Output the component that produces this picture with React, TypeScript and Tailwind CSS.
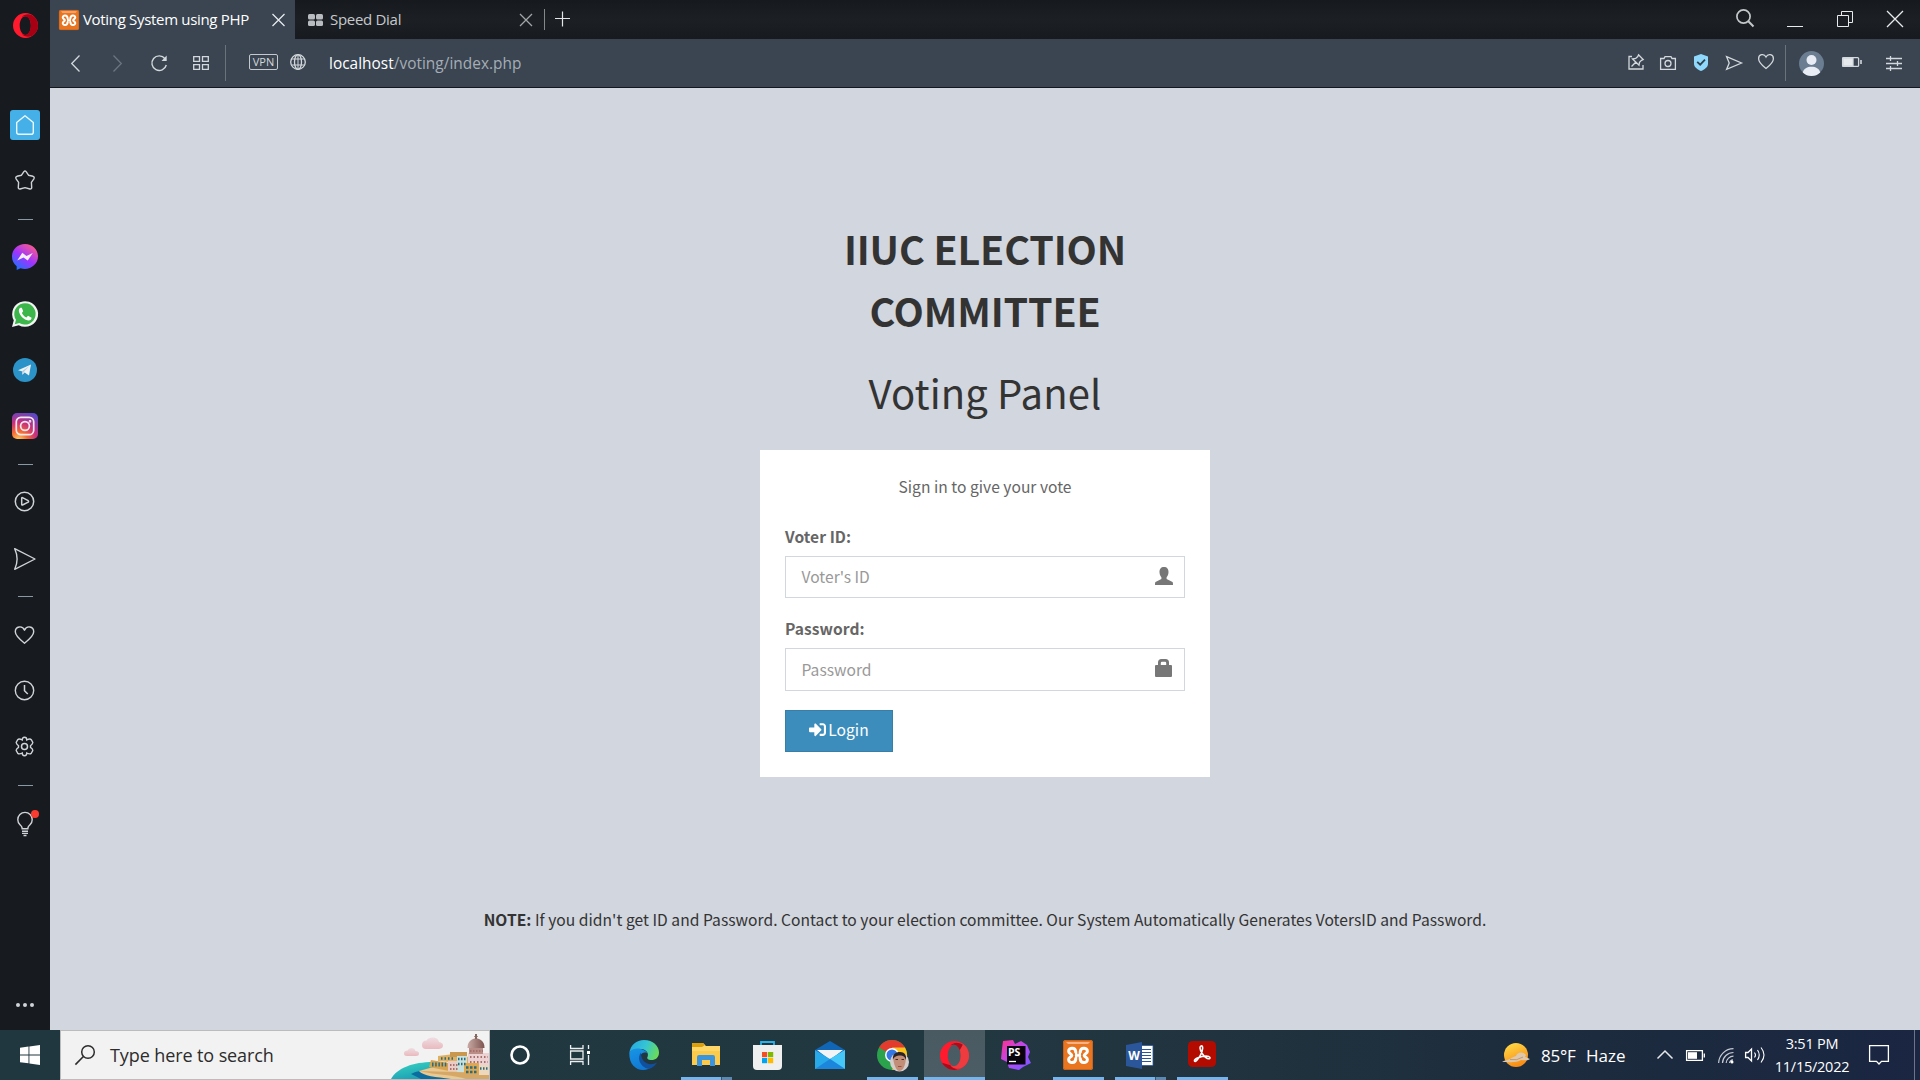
import React from "react";
import { FaSignInAlt } from "react-icons/fa";

const UI = "font-['Open_Sans','Noto_Sans',sans-serif]";

type IconProps = { w: number; h: number; vb?: string; className?: string; children: React.ReactNode };

function Icon({ w, h, vb, className = "", children }: IconProps) {
  return (
    <svg
      width={w}
      height={h}
      viewBox={vb ?? `0 0 ${w} ${h}`}
      fill="none"
      stroke="currentColor"
      strokeWidth={1.3}
      className={`block shrink-0 overflow-visible ${className}`}
    >
      {children}
    </svg>
  );
}

function XamppMark({ size, className = "" }: { size: number; className?: string }) {
  return (
    <Icon w={size} h={size} vb="0 0 30 30" className={className}>
      <rect width="30" height="30" rx="2.5" fill="#ea7521" stroke="none" />
      <path d="M3 2h24l-2 2H5z" fill="#f5b183" stroke="none" />
      <rect x=".5" y=".5" width="29" height="29" rx="2" stroke="#c9631b" strokeWidth="1" />
      <g stroke="#fff" strokeWidth="3" strokeLinejoin="round" strokeLinecap="round">
        <path d="M12.800 12C12.500 7 5.600 7.300 5.600 11.300C5.600 13.500 8.800 13.800 8.800 15.400C8.800 17 5.600 17.300 5.600 19.600C5.600 23.600 12.500 23.800 12.800 18.800" />
        <path d="M17.200 12C17.500 7 24.400 7.300 24.400 11.300C24.400 13.500 21.200 13.800 21.200 15.400C21.200 17 24.400 17.300 24.400 19.600C24.400 23.600 17.500 23.800 17.200 18.800" />
        <path d="M12.800 12L13.600 15.400L12.800 18.800M17.200 12L16.400 15.400L17.200 18.800M13 15.400H17" strokeWidth="2.400" />
      </g>
    </Icon>
  );
}

function OperaMark({ w, h, className = "", bright = false }: { w: number; h: number; className?: string; bright?: boolean }) {
  return (
    <Icon w={w} h={h} vb="0 0 28 28" className={className}>
      <path
        fillRule="evenodd"
        stroke="none"
        fill="#ff1b2d"
        d="M14 0a14 14 0 1 0 0 28a14 14 0 1 0 0-28zM14 3.500c3.800 0 6 4.800 6 10.500s-2.200 10.500-6 10.500s-6.500-4.800-6.500-10.500s2.700-10.500 6.500-10.500z"
      />
      <path
        stroke="none"
        fill={bright ? "#ee3b3f" : "#a70014"}
        d="M10 4.500C12 1.500 17 .500 21 2.200C25.500 4.600 28 9 28 14S25.500 23.400 21 25.800C17 27.500 12 26.500 10 23.500C15 26.500 20 22 20 14S15 1.500 10 4.500z"
      />
      {bright && <path stroke="none" fill="#a90d1c" d="M10 4.500C13 .800 18 1 22 3.500L19 9C17 3.500 13 2.500 10 4.500zM2 21C5 26.500 11 29 17 27.600C14 27 11 25.500 10 23.500z" />}
    </Icon>
  );
}

function TitleBar() {
  return (
    <div className="flex h-[39px] shrink-0 bg-gradient-to-b from-[#16191d] via-[#1c1f23] to-[#171a1e] text-[15px] leading-[39px]">
      <div className="flex w-[245px] items-center bg-[#3a4551] text-white">
        <XamppMark size={20} className="ml-[9px]" />
        <span className="ml-1 w-[189px] whitespace-nowrap tracking-[-0.32px]">Voting System using PHP</span>
        <Icon w={12} h={12} className="text-[#e6e9ec]">
          <path d="M.5 0L12.500 12M12.500 0L.5 12" />
        </Icon>
      </div>
      <div className="flex w-[249px] items-center text-[#c6c9cc]">
        <Icon w={15} h={12} className="ml-[13px]">
          <g fill="#b9bcc0" stroke="none">
            <rect width="7" height="5.500" rx="1.500" />
            <rect x="8" width="7" height="5.500" rx="1.500" />
            <rect y="6.500" width="7" height="5.500" rx="1.500" />
            <rect x="8" y="6.500" width="7" height="5.500" rx="1.500" />
          </g>
        </Icon>
        <span className="ml-[7px] w-[190px] whitespace-nowrap tracking-[-0.3px]">Speed Dial</span>
        <Icon w={12} h={12} className="text-[#a3a6a9]">
          <path d="M0 0L12 12M12 0L0 12" />
        </Icon>
      </div>
      <div className="mt-[9px] h-[21px] w-px bg-[#85888b]" />
      <Icon w={14} h={14} className="mt-3 ml-[10px] text-[#e3e5e7]">
        <path d="M7.500 -.5V14.500M0 6.500H15" strokeWidth="1.200" />
      </Icon>
      <div className="flex-1" />
      <div className="mt-[9px] mr-[17px] flex text-[#e8eaec]">
        <Icon w={18} h={18} className="text-[#c5c8ca]">
          <circle cx="7.500" cy="7.500" r="6.600" strokeWidth="1.700" />
          <path d="M12.300 12.300L17.500 17.500" strokeWidth="2" />
        </Icon>
        <Icon w={16} h={18} className="ml-[33px]">
          <path d="M0 17.500H16" strokeWidth="1" />
        </Icon>
        <Icon w={16} h={18} className="ml-[34px]">
          <path d="M.5 6.500H11.500V17.500H.5zM4.500 6V2.500H15.500V13.500H12" strokeWidth="1" />
        </Icon>
        <Icon w={16} h={18} className="ml-[34px]">
          <path d="M0 2L16 18M16 2L0 18" />
        </Icon>
      </div>
    </div>
  );
}

function AddressBar() {
  return (
    <div className="flex h-[49px] shrink-0 items-center border-b border-[#14181c] bg-[#3a4551] text-[#d3d8dc]">
      <Icon w={9} h={17} className="ml-[21px]">
        <path d="M8.500 .5L.7 8.500L8.500 16.500" />
      </Icon>
      <Icon w={9} h={17} className="ml-[33px] text-[#6a7580]">
        <path d="M.5 .5L8.300 8.500L.5 16.500" />
      </Icon>
      <Icon w={16} h={16} className="ml-[29px]">
        <path d="M14 3.700A7.300 7.300 0 1 0 15.300 10" strokeWidth="1.400" />
        <path d="M15.700 .5V6H10.500z" fill="currentColor" stroke="none" />
      </Icon>
      <Icon w={16} h={14} className="ml-[26px]">
        <path d="M.7 .6H6.500V5.400H.7zM9.500 .6H15.300V5.400H9.500zM.7 8.600H6.500V13.400H.7zM9.500 8.600H15.300V13.400H9.500z" />
      </Icon>
      <div className="ml-4 h-9 w-px bg-[#69737e]" />
      <div className={`ml-[23px] mb-[2px] flex h-4 w-[29px] items-center justify-center rounded-[2px] border border-[#c3c9ce] text-[11px] leading-[14px] text-[#d3d8dc] ${UI}`}>VPN</div>
      <Icon w={16} h={16} className="mb-[2px] ml-3">
        <circle cx="8" cy="8" r="7.300" />
        <ellipse cx="8" cy="8" rx="3.500" ry="7.300" />
        <path d="M1.500 5H14.500M1.500 11H14.500M8 1V15" strokeWidth="1" />
      </Icon>
      <div className="mt-[2px] ml-[23px] text-[15.4px] whitespace-nowrap text-[#a5adb6] tracking-[0.03px]">
        <span className="text-white">localhost</span>/voting/index.php
      </div>
      <div className="flex-1" />
      <Icon w={16} h={16} className="mb-[2px]">
        <path d="M4 2.500H1V15H15V11" />
        <path d="M10.500 .8L15.200 5.500L13.500 6.300L11.500 8.300L11 11.200L8 8.300L4.500 5L7.700 4.500L9.800 2.500zM7.700 8.200L3.500 12.500" />
      </Icon>
      <Icon w={16} h={14} className="mb-px ml-4">
        <path d="M.6 2.500H4L5 .7H11L12 2.500H15.400V13.400H.6z" />
        <circle cx="8" cy="7.500" r="3" />
      </Icon>
      <Icon w={14} h={17} className="mb-px ml-[18px]">
        <path d="M7 0L14 2.500V10C14 13 10.500 15.500 7 17C3.500 15.500 0 13 0 10V2.500z" fill="#8fd8fb" stroke="none" />
        <path d="M3.200 7.800L6.200 10.700L11 5.700" stroke="#2f3f4c" strokeWidth="1.800" />
      </Icon>
      <Icon w={16} h={14} className="ml-[18px]">
        <path d="M.6 .7L15.500 7L.6 13.400L3.200 7z" />
      </Icon>
      <Icon w={16} h={15} className="mb-[3px] ml-4">
        <path d="M8 14.500C3 10.500 .6 7.500 .6 4.700C.6 .2 6 -.8 8 3C10 -.8 15.400 .2 15.400 4.700C15.400 7.500 13 10.500 8 14.500z" />
      </Icon>
      <div className="ml-[11px] h-9 w-px bg-[#69737e]" />
      <Icon w={25} h={25} className="ml-[13px]">
        <circle cx="12.500" cy="12.500" r="12.500" fill="#6b7d90" stroke="none" />
        <circle cx="12.500" cy="9" r="5" fill="#e8edf5" stroke="none" />
        <path d="M3.800 21.500C5 13.800 20 13.800 21.200 21.500A12.500 12.500 0 0 1 3.800 21.500z" fill="#e8edf5" stroke="none" />
      </Icon>
      <Icon w={20} h={10} className="mb-[2px] ml-[18px]">
        <rect x=".6" y=".6" width="16" height="8.800" rx="1" />
        <path d="M1 1H11V9H1z" fill="#e6e9ec" />
        <path d="M19 3V7" strokeWidth="1.600" />
      </Icon>
      <Icon w={16} h={15} className="mr-[18px] ml-6">
        <path d="M0 2.500H16M0 7.500H16M0 12.500H16M4.500 0V5M11.500 5V10M4.500 10V15" />
      </Icon>
    </div>
  );
}

function Dash({ className }: { className: string }) {
  return <div className={`h-px w-[15px] shrink-0 bg-[#8898a5] ${className}`} />;
}

function Sidebar() {
  return (
    <aside className="flex w-[50px] shrink-0 flex-col items-center bg-[#171a1f] text-[#cfd4d8]">
      <OperaMark w={25} h={25} className="mt-[13px]" />
      <div className="mt-[72px] flex size-[30px] shrink-0 items-center justify-center rounded-[3px] bg-[#45b0e8]">
        <Icon w={18} h={20} className="text-[#ecf7fd]">
          <path d="M9 .7L17.300 7.500V17.200Q17.300 19.300 15.200 19.300H2.800Q.7 19.300 .7 17.200V7.500z" strokeWidth="1.400" strokeLinejoin="round" />
        </Icon>
      </div>
      <Icon w={20} h={20} className="mt-[30px] mr-px">
        <path d="M8.900 1.600Q10 .3 11.100 1.600L13.500 5.200L18 6.300Q19.800 7 18.900 8.800L16.400 12.300L16.700 17.600Q16.500 19.300 14.900 19L10 17.600L5.100 19Q3.500 19.300 3.300 17.600L3.600 12.300L1.100 8.800Q.2 7 2 6.300L6.500 5.200z" strokeWidth="1.400" strokeLinejoin="round" />
      </Icon>
      <Dash className="mt-[29px]" />
      <Icon w={26} h={26} className="mt-6">
        <defs>
          <linearGradient id="msgr" x1="0.1" y1="1" x2="0.8" y2="0">
            <stop offset="0" stopColor="#0a7cff" />
            <stop offset="0.5" stopColor="#a033ff" />
            <stop offset="1" stopColor="#ff5c87" />
          </linearGradient>
        </defs>
        <path d="M13 0C5.500 0 0 5.500 0 12.500C0 16.500 1.800 20 4.700 22.300V26L8.500 24.200C17 27 26 21 26 12.500C26 5.500 20.500 0 13 0z" fill="url(#msgr)" stroke="none" />
        <path d="M5.200 16.500L10.300 8.800L14.500 12L20.800 9L15.700 16.500L11.500 13.400z" fill="#f3eefc" stroke="none" />
      </Icon>
      <Icon w={26} h={26} className="mt-[31px]">
        <path d="M0 26L1.800 19.300A13 12.800 0 1 1 6.800 24.200z" fill="#f2f4f2" stroke="none" />
        <path d="M2.800 23.200L4 18.800A10.700 10.700 0 1 1 7.300 22z" fill="#3cb54a" stroke="none" />
        <path d="M8.500 6.700C7.200 7.300 6.500 8.800 7 10.800C8 15 12 19 16.200 19.500C18.300 19.700 19.600 18.400 19.600 16.700L16 14.800L14.400 16.400C12.300 15.500 10.600 13.700 9.900 11.900L11.200 10.300L9.800 6.800z" fill="#fff" stroke="none" />
      </Icon>
      <Icon w={24} h={24} className="mt-[31px]">
        <circle cx="12" cy="12" r="12" fill="#2b93c7" stroke="none" />
        <path d="M5 12.200L18 6.500L16 17.500L11.700 14.600L9.300 16.800L8.900 13.200z" fill="#eef3f6" stroke="none" />
        <path d="M8.900 13.200L16.300 8L10.800 14L9.300 16.800z" fill="#b5cfdf" stroke="none" />
      </Icon>
      <Icon w={26} h={26} className="mt-[31px]">
        <defs>
          <radialGradient id="insta" cx="0.25" cy="1.05" r="1.15">
            <stop offset="0" stopColor="#ffd563" />
            <stop offset="0.3" stopColor="#f36b35" />
            <stop offset="0.6" stopColor="#c9307c" />
            <stop offset="1" stopColor="#5b48c8" />
          </radialGradient>
        </defs>
        <rect width="26" height="26" rx="5" fill="url(#insta)" stroke="none" />
        <g stroke="#f6e9ee" strokeWidth="1.700">
          <rect x="4.300" y="4.300" width="17.400" height="17.400" rx="4.500" />
          <circle cx="13" cy="13" r="4.400" />
          <circle cx="18" cy="8.300" r=".5" />
        </g>
      </Icon>
      <Dash className="mt-[25px]" />
      <Icon w={20} h={20} className="mt-[26px] mr-[2px]">
        <circle cx="10.500" cy="10.500" r="9.200" strokeWidth="1.500" />
        <path d="M7.700 7.200Q7.700 6.400 8.500 6.700L14.200 9.700Q15 10.500 14.200 11.200L8.500 14Q7.700 14.200 7.700 13.500z" strokeWidth="1.500" strokeLinejoin="round" />
      </Icon>
      <Icon w={22} h={22} className="mt-[37px]">
        <path d="M.7 .7L21 11L.7 21.300Q5.500 11 .7 .7z" strokeWidth="1.400" strokeLinejoin="round" />
      </Icon>
      <Dash className="mt-[26px]" />
      <Icon w={20} h={18} className="mt-[29px] mr-[2px]">
        <path d="M10.500 17.200C4.500 12.500 1.300 9.500 1.300 5.800C1.300 0 8.500 -.8 10.500 4.200C12.500 -.8 19.700 0 19.700 5.800C19.700 9.500 16.500 12.500 10.500 17.200z" strokeWidth="1.400" strokeLinejoin="round" />
      </Icon>
      <Icon w={20} h={20} className="mt-[36px] mr-[2px]">
        <circle cx="10.500" cy="10.500" r="9.200" strokeWidth="1.400" />
        <path d="M10.500 5V10.800L13.800 14" strokeWidth="1.500" />
      </Icon>
      <Icon w={18} h={20} className="mt-[36px] mr-[2px]">
        <g transform="translate(.5 .5)">
          <path d="M6.700 3.500Q6.700 .8 9 .8T11.300 3.500Q14.500 1.800 15.800 3.200L17.300 6Q17.300 7.500 15 9.200V10.800Q17.500 12.500 17.300 14L15.800 16.700Q14.500 18.200 11.300 16.500Q11.300 19.200 9 19.200T6.700 16.500Q3.500 18.200 2.200 16.700L.7 14Q.5 12.500 3 10.800V9.200Q.7 7.500 .7 6L2.200 3.200Q3.500 1.800 6.700 3.500z" strokeWidth="1.400" />
          <circle cx="9" cy="10" r="3" strokeWidth="1.500" />
        </g>
      </Icon>
      <Dash className="mt-[29px]" />
      <div className="relative mt-[26px] shrink-0">
        <Icon w={16} h={24}>
          <path d="M5 16.500V15.500Q4.800 14.500 3 12.800A7.200 7.200 0 1 1 13 12.800Q11.200 14.500 11 15.500V16.500M4.500 16.700H11.500M5 19.200H11M5 21.400H11M6.500 23.500H9.500" strokeWidth="1.400" />
        </Icon>
        <div className="absolute -top-[2px] left-[14px] size-2 rounded-full bg-[#fb3b2f]" />
      </div>
      <div className="mt-auto mb-[23px] flex gap-[3px]">
        <div className="size-1 rounded-full bg-[#cfd4d8]" />
        <div className="size-1 rounded-full bg-[#cfd4d8]" />
        <div className="size-1 rounded-full bg-[#cfd4d8]" />
      </div>
    </aside>
  );
}

function LoginPage() {
  return (
    <main className="flex flex-1 flex-col items-center bg-[#d2d6de] font-['Noto_Sans_CJK_SC',sans-serif] text-[#333]">
      <h1 className="mt-[129px] w-[450px] text-center text-[39.4px] leading-[62px] font-bold tracking-[-0.15px]">
        IIUC ELECTION
        <br />
        COMMITTEE
      </h1>
      <h2 className="mt-[20px] text-[40px] leading-[62px] tracking-[0.12px]">Voting Panel</h2>
      <form className="mt-[27px] flex w-[450px] flex-col bg-white px-[25px] pt-6 pb-[25px] text-[15.6px] leading-[25px] text-[#666]" onSubmit={(e) => e.preventDefault()}>
        <p className="text-center tracking-[0.02px]">Sign in to give your vote</p>
        <label className="mt-[25px] font-bold tracking-[0.05px]">Voter ID:</label>
        <div className="mt-[7px] flex h-[42px] justify-between border border-[#d2d6de] pr-[11px] pl-[15.500px]">
          <span className="mt-[7px] text-[#999]">Voter's ID</span>
          <Icon w={18} h={18} className="mt-[10px]">
            <path d="M9 0C12 0 13.700 2 13.500 5.500C13.300 8 12.300 9.300 11.600 10.300V12L17.500 15C18 15.500 18 16.500 18 18H0C0 16.500 0 15.500 .5 15L6.400 12V10.300C5.700 9.300 4.700 8 4.500 5.500C4.300 2 6 0 9 0z" fill="#777" stroke="none" />
          </Icon>
        </div>
        <label className="mt-[18px] font-bold tracking-[0.05px]">Password:</label>
        <div className="mt-[7px] flex h-[43px] justify-between border border-[#d2d6de] pr-[12.500px] pl-[15.500px]">
          <span className="mt-2 text-[#999]">Password</span>
          <Icon w={17} h={18} className="mt-[10px]">
            <path fillRule="evenodd" d="M3 6V3.500Q3 0 6.500 0H10.500Q14 0 14 3.500V6H16Q17 6 17 7V17Q17 18 16 18H1Q0 18 0 17V7Q0 6 1 6zM5.800 6H11.200V4Q11.200 2.800 10 2.800H7Q5.800 2.800 5.800 4z" fill="#777" stroke="none" />
          </Icon>
        </div>
        <button className="mt-[19px] flex h-[42px] w-[108px] items-center justify-center border border-[#367fa9] bg-[#3c8dbc] pb-[3px] text-white">
          <FaSignInAlt size={17} />
          <span className="ml-[2px]">Login</span>
        </button>
      </form>
      <p className="mt-[130px] text-[15.6px] leading-[25px] whitespace-nowrap tracking-[0.035px]">
        <b>NOTE:</b> If you didn't get ID and Password. Contact to your election committee. Our System Automatically Generates VotersID and Password.
      </p>
    </main>
  );
}

function SearchArt() {
  return (
    <Icon w={98} h={48}>
      <defs>
        <linearGradient id="sea" x1="0" y1="0" x2="1" y2="1">
          <stop offset="0" stopColor="#38d6c0" />
          <stop offset="1" stopColor="#0d7fb0" />
        </linearGradient>
        <linearGradient id="dome" x1="0" y1="0" x2="1" y2="0">
          <stop offset="0" stopColor="#c9aaa5" />
          <stop offset="1" stopColor="#7d5450" />
        </linearGradient>
        <linearGradient id="cloud" x1="0" y1="0" x2="0" y2="1">
          <stop offset="0" stopColor="#eedee2" />
          <stop offset="1" stopColor="#e9b9be" />
        </linearGradient>
      </defs>
      <g stroke="none">
        <path d="M13 22.500Q13 19.500 16.500 19.500Q17.500 17 20.500 17T24.500 20Q28 20 28 22.500T25 25H16Q13 25 13 22.500z" fill="url(#cloud)" />
        <path d="M31 14Q31 9.500 35.500 9.500Q37 6.500 42 6.500T48 11Q52 11.500 52 14.500T48 18H35Q31 18 31 14z" fill="url(#cloud)" />
        <path d="M0 48C6 37 22 31 42 31L98 36V48z" fill="url(#sea)" />
        <path d="M20 43C35 36 50 40 98 40V48H30z" fill="#0b6d9f" />
        <path d="M28 40L46 35L98 38V48H60C45 46 32 45 28 40z" fill="#e9c891" />
        <path d="M28 40C45 44 65 44 75 48H98V42z" fill="#d6a868" />
        <path d="M40 29L58 32V40L38 36z" fill="#d9a34e" />
        <path d="M47 25L63 23L78 26V40H58V31L47 30z" fill="#e0b060" />
        <path d="M59 21H76V26H59z" fill="#c9974d" />
        <path d="M57 30H68V40H57z" fill="#eacbc6" />
        <path d="M66 25H76V41H66z" fill="#c8e0de" />
        <path d="M77 22H98V35H77z" fill="#edd2d3" />
        <path d="M73 32H88V43H73z" fill="#dfa750" />
        <path d="M88 34H98V44H88z" fill="#edd8be" />
        <path d="M78 17H92V23H78z" fill="#b98e87" />
        <path d="M76.500 17C76.500 10 81 7.500 85 7.500S93.500 10 93.500 17z" fill="url(#dome)" />
        <path d="M84 3H86V8H84zM83.300 5H86.700V6H83.300z" fill="#846760" />
      </g>
      <g stroke="#276c80" strokeWidth="2.400">
        <path d="M41 33.500H56" strokeDasharray="1.500 1.700" strokeWidth="4" />
        <path d="M50 27.500H64" strokeDasharray="1.500 2" />
        <path d="M67 28H76M67 33H76" strokeDasharray="1.500 1.500" />
        <path d="M75 36.500H87M75 41H87" strokeDasharray="2.500 1.500" />
        <path d="M89 37.500H97" strokeDasharray="1.500 1.500" />
      </g>
      <g stroke="#a8706c" strokeWidth="2">
        <path d="M79 26H97M79 31H97" strokeDasharray="1.500 2" />
        <path d="M79 20H92" strokeDasharray="1.500 1.500" />
        <path d="M59 34H67M59 38H67" strokeDasharray="1.500 1.500" />
      </g>
    </Icon>
  );
}

function TaskButton({ children, line = "none", active = false }: { children: React.ReactNode; line?: "none" | "single" | "stacked"; active?: boolean }) {
  return (
    <div className={`flex h-[50px] shrink-0 flex-col ${active ? "ml-px w-[61px] bg-gradient-to-b from-[#4a5a61] to-[#4d5d66]" : "w-[62px]"}`}>
      <div className={`flex h-[47px] items-center justify-center pt-[3px] ${active ? "pr-px" : ""}`}>{children}</div>
      {line === "single" && <div className={`h-[3px] bg-[#76b4ee] ${active ? "" : "mr-[5px] ml-[6px]"}`} />}
      {line === "stacked" && (
        <div className="mr-[5px] ml-[6px] flex h-[3px]">
          <div className="w-10 bg-[#76b4ee]" />
          <div className="flex-1 border-l border-[#35546d] bg-[#5c89b1]" />
        </div>
      )}
    </div>
  );
}

function Taskbar() {
  return (
    <footer className="flex h-[50px] shrink-0 bg-[linear-gradient(90deg,#213740_0%,#223841_50%,#20323e_66%,#1d2c3d_80%,#1a2642_100%)] text-white">
      <div className="flex w-[60px] items-center justify-center">
        <Icon w={20} h={20}>
          <path d="M0 2.800L8.500 1.600V9.500H0zM9.400 1.500L20 0V9.500H9.400zM0 10.400H8.500V18.300L0 17.200zM9.400 10.400H20V20L9.400 18.400z" fill="#fff" stroke="none" />
        </Icon>
      </div>
      <div className="flex w-[430px] items-center border border-[#bcbcbc] bg-[#f2f2f2] text-[#2c2c2c]">
        <Icon w={20} h={20} className="ml-[14px]">
          <circle cx="13" cy="7" r="6.300" strokeWidth="1.500" />
          <path d="M8.400 11.500L.4 19.600" strokeWidth="1.600" />
        </Icon>
        <span className="mt-px ml-[15px] flex-1 text-[18px] tracking-[-0.1px] whitespace-nowrap">Type here to search</span>
        <SearchArt />
      </div>
      <div className="flex w-[60px] items-center justify-center">
        <Icon w={20} h={20}>
          <circle cx="10" cy="10" r="8.500" stroke="#fff" strokeWidth="2.600" />
        </Icon>
      </div>
      <div className="flex w-[63px] items-center justify-center pr-[3px]">
        <Icon w={20} h={20} className="text-[#eceeef]">
          <path d="M.6 0V3.500H13V0M.6 20V16.500H13V20M.6 6H13V14H.6zM18.500 0V4M18.500 10V20" />
          <rect x="17" y="6" width="3" height="3" fill="#fff" stroke="none" />
        </Icon>
      </div>
      <TaskButton>
        <Icon w={30} h={30}>
          <defs>
            <linearGradient id="edgeTop" x1="0" y1="0.3" x2="1" y2="0.6">
              <stop offset="0" stopColor="#26a9e0" />
              <stop offset="0.5" stopColor="#35c5d5" />
              <stop offset="1" stopColor="#6bdd55" />
            </linearGradient>
            <linearGradient id="edgeLow" x1="0" y1="0" x2="0.4" y2="1">
              <stop offset="0" stopColor="#1795e5" />
              <stop offset="1" stopColor="#1179d3" />
            </linearGradient>
          </defs>
          <g stroke="none">
            <path d="M.3 13C1.500 5 7.500 0 15 0C24 0 30 6 30 12.500C30 17.500 26.500 20 22.500 20C19 20 17.500 18.500 18.500 17C20 14 18 9.500 12 9C6 8.700 2 10 .3 13z" fill="url(#edgeTop)" />
            <path d="M.3 13C2.500 8.500 8 8 12 9C16 10 18 12 18 13C13 11 9 16 12 22C14 26 18 27 24 26C15 34 0 30 .3 13z" fill="url(#edgeLow)" />
            <path d="M12 12.500C8 17 10 27 20 29C24 27.500 26.500 25 28 22.500C20 27 11.500 22 12 12.500z" fill="#0f519e" />
          </g>
        </Icon>
      </TaskButton>
      <TaskButton line="stacked">
        <Icon w={28} h={23} className="mt-[-2px]">
          <g stroke="none">
            <path d="M0 0H11L14 3H28V22H0z" fill="#ffd768" />
            <path d="M0 0H11L13 2L10 4H0z" fill="#dd9f0b" />
            <path d="M0 8H28V22H0z" fill="#fccb4c" />
            <path d="M5 23V14Q5 12 7 12H21Q23 12 23 14V23H18V17H10V23z" fill="#3b94dc" />
          </g>
        </Icon>
      </TaskButton>
      <TaskButton>
        <Icon w={29} h={29} className="mr-px">
          <path d="M8 6V1H21V6" stroke="#27b1ee" strokeWidth="1.800" />
          <path d="M0 4H29V25Q29 29 25 29H4Q0 29 0 25z" fill="#efefef" stroke="none" />
          <g stroke="none">
            <rect x="9" y="11" width="5.200" height="5.200" fill="#f25022" />
            <rect x="15" y="11" width="5.200" height="5.200" fill="#7fba00" />
            <rect x="9" y="17" width="5.200" height="5.200" fill="#00a4ef" />
            <rect x="15" y="17" width="5.200" height="5.200" fill="#ffb900" />
          </g>
        </Icon>
      </TaskButton>
      <TaskButton>
        <Icon w={30} h={28}>
          <g stroke="none">
            <path d="M0 9L15 0L30 9V20H0z" fill="#1066b5" />
            <path d="M2 9H28L15 19z" fill="#f3f4f6" />
            <path d="M0 9L15 18L30 9V28H0z" fill="#27a9ea" />
            <path d="M15 18L30 9V28z" fill="#45c7f7" />
            <path d="M0 28L15 18L30 28z" fill="#1c86dc" />
          </g>
        </Icon>
      </TaskButton>
      <TaskButton line="single">
        <Icon w={31} h={31} className="ml-px">
          <g stroke="none">
            <circle cx="15" cy="15" r="15" fill="#2ba24c" />
            <path d="M15 15L2 7.500A15 15 0 0 1 28 7.500z" fill="#e33b2e" />
            <path d="M15 7.500H28A15 15 0 0 1 15 30L21.500 18z" fill="#fcc31e" />
            <circle cx="15" cy="15" r="7" fill="#fff" />
            <circle cx="15" cy="15" r="5.500" fill="#3478e5" />
            <circle cx="22.500" cy="22" r="9.500" fill="#d4cdcb" />
            <path d="M16.500 21C16 15 19 12.500 23 12.500S29.500 16 28.500 22C27.500 27 25.500 31 22.500 31S17.500 26 16.500 21z" fill="#c28e77" />
            <path d="M16 20C15.300 14 18.500 12 23 12S30 15.500 28.800 20C28 16.500 26 15.500 23 15.500S17 16.500 16 20z" fill="#2c2324" />
            <path d="M18.500 19.500H21M24.500 19.500H27" stroke="#4a2c26" strokeWidth="1" />
            <path d="M21 26.500H24.500" stroke="#9c4f45" strokeWidth="1" />
          </g>
        </Icon>
      </TaskButton>
      <TaskButton line="single" active>
        <OperaMark w={29} h={29} bright />
      </TaskButton>
      <TaskButton>
        <Icon w={30} h={31}>
          <defs>
            <linearGradient id="storm" x1="0" y1="0" x2="1" y2="1">
              <stop offset="0" stopColor="#ff318c" />
              <stop offset="0.5" stopColor="#b74af7" />
              <stop offset="1" stopColor="#7258ff" />
            </linearGradient>
          </defs>
          <path d="M2 1L12 0L14 4L20 1L26 5L29 12L27 17L30 23L22 27L18 30L8 28L6 22L0 19L1 9z" fill="url(#storm)" stroke="none" />
          <rect x="6" y="6" width="18.500" height="18.500" fill="#090310" stroke="none" />
          <text x="7" y="15.800" fill="#fff" stroke="none" fontSize="10.500" fontWeight="700" fontFamily="Open Sans, sans-serif">PS</text>
          <path d="M8 21.500H15" stroke="#fff" strokeWidth="1.300" />
        </Icon>
      </TaskButton>
      <TaskButton line="single">
        <XamppMark size={30} />
      </TaskButton>
      <TaskButton line="stacked">
        <Icon w={27} h={27} className="mr-px">
          <path d="M14 3.500H27V23.500H14z" fill="#fff" stroke="#2b579a" strokeWidth=".8" />
          <path d="M15 7.500H25M15 10.500H25M15 13.500H25M15 16.500H25M15 19.500H25" stroke="#2b579a" strokeWidth="1.200" />
          <path d="M0 3L16 0V27L0 24z" fill="#2b579a" stroke="none" />
          <text x="8" y="18" textAnchor="middle" fill="#fff" stroke="none" fontSize="12" fontWeight="700" fontFamily="Open Sans, sans-serif">W</text>
        </Icon>
      </TaskButton>
      <TaskButton line="single">
        <Icon w={28} h={28} className="mt-[-2px]">
          <rect y="1" width="28" height="26" rx="4.500" fill="#b30b00" stroke="none" />
          <path d="M13 6C15.500 5 15 10.500 12.500 15C10.500 19 7.500 22.500 6.500 21C5.500 19 13 16 18 16C22.500 16 23 19 20.500 18.800C17 18.500 12 11.500 12 8Q12 6.300 13 6z" stroke="#fff" strokeWidth="1.600" />
        </Icon>
      </TaskButton>
      <div className="flex-1" />
      <Icon w={28} h={24} className="mt-[13px]">
        <defs>
          <linearGradient id="sun" x1="0" y1="0" x2="0.4" y2="1">
            <stop offset="0" stopColor="#ffe04b" />
            <stop offset="1" stopColor="#f98d16" />
          </linearGradient>
        </defs>
        <circle cx="13" cy="12" r="12" fill="url(#sun)" stroke="none" />
        <path d="M-1 19C2 17 5 17 7 16C9 14 11 14 13 13C14 9 20 8 23 12L22 14C24 14 25 15.500 27 16C25 18 21 17 18 17C14 20 6 19 -1 19z" fill="#ddc8ad" stroke="none" />
        <path d="M7 16.500Q14 18 20 14" stroke="#c59a6c" strokeWidth="1" />
      </Icon>
      <span className="mt-[14px] ml-[10px] w-[45px] text-[17px] leading-6 tracking-[-0.25px]">85°F</span>
      <span className="mt-[14px] w-[71px] text-[17px] leading-6">Haze</span>
      <Icon w={16} h={9} className="mt-5 text-[#e4e8ec]">
        <path d="M.5 8.500L8 1L15.500 8.500" strokeWidth="1.500" />
      </Icon>
      <Icon w={19} h={11} className="mt-5 ml-[13px]">
        <path d="M.6 .6H16.400V10.400H.6zM18.300 3.500V7.500" />
        <rect x="2" y="2.200" width="9" height="6.600" fill="#fff" stroke="none" />
      </Icon>
      <Icon w={16} h={16} className="mt-[18px] ml-[13px] text-[#c6ccd4]">
        <path d="M.6 15A15 15 0 0 1 15.500 .6M4.500 15A11 11 0 0 1 15.500 4.500M8.200 15A7.300 7.300 0 0 1 15.500 8.200M11.500 15A4 4 0 0 1 15 11.800" strokeWidth="1.200" />
        <circle cx="14" cy="14" r="1.500" fill="#fff" stroke="none" />
      </Icon>
      <Icon w={20} h={16} className="mt-[17px] ml-[11px]">
        <path d="M.6 5.500H3L6.500 2V14L3 10.500H.6z" />
        <path d="M9.500 5.500Q11.500 8 9.500 10.500M12.500 3Q16 8 12.500 13M16 .5Q22 8 16 15.500" strokeWidth="1.100" />
      </Icon>
      <div className="mt-[3px] ml-[9px] flex w-[76px] flex-col items-center text-[14.500px] leading-[22.500px] tracking-[-0.25px] whitespace-nowrap">
        <span>3:51 PM</span>
        <span>11/15/2022</span>
      </div>
      <Icon w={20} h={20} className="mt-[15px] ml-[19px]">
        <path d="M.6 .6H19.400V16.400H12.500L10 19L7.500 16.400H.6z" />
      </Icon>
      <div className="mr-[5px] ml-[25px] w-px bg-[#6b7488]" />
    </footer>
  );
}

export default function App() {
  return (
    <div className={`flex h-[1080px] w-[1920px] flex-col overflow-hidden ${UI}`}>
      <div className="flex min-h-0 flex-1">
        <Sidebar />
        <div className="flex flex-1 flex-col">
          <TitleBar />
          <AddressBar />
          <LoginPage />
        </div>
      </div>
      <Taskbar />
    </div>
  );
}
